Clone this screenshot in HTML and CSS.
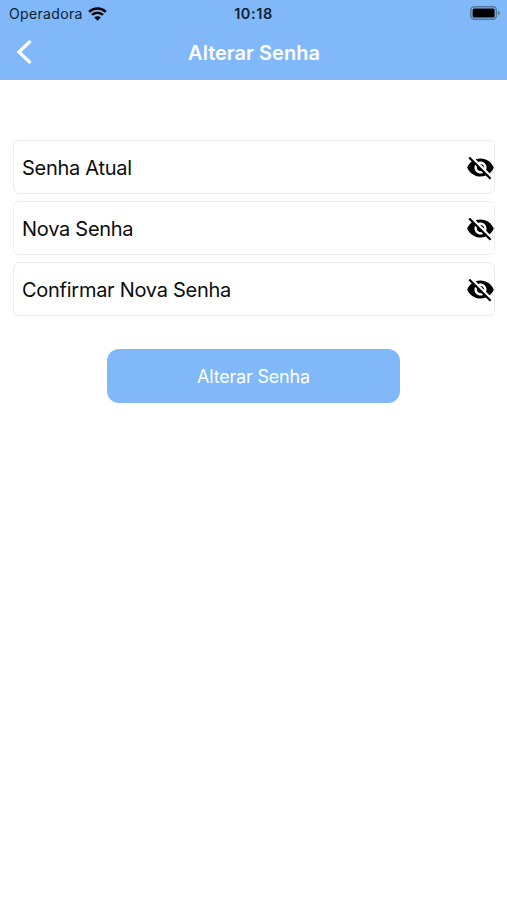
FILE: index.html
```html
<!DOCTYPE html>
<html lang="pt-BR">
<head>
  <meta charset="UTF-8">
  <meta name="viewport" content="width=device-width, initial-scale=1">
  <title>Alterar Senha</title>
  <link rel="stylesheet" href="styles.css">
</head>
<body>
  <!-- Ícone reutilizado nos três campos -->
  <svg class="icons" width="0" height="0">
    <symbol id="eye-off" viewBox="0 0 24 24">
      <path d="M12 7c2.76 0 5 2.24 5 5 0 .65-.13 1.26-.36 1.83l2.92 2.92c1.51-1.26 2.7-2.89 3.43-4.75-1.73-4.39-6-7.5-11-7.5-1.4 0-2.74.25-3.98.7l2.16 2.16C10.74 7.13 11.35 7 12 7zM2 4.27l2.28 2.28.46.46C3.08 8.3 1.78 10.02 1 12c1.73 4.39 6 7.5 11 7.5 1.55 0 3.03-.3 4.38-.84l.42.42L19.73 22 21 20.73 3.27 3 2 4.27zM7.53 9.8l1.55 1.55c-.05.21-.08.43-.08.65 0 1.66 1.34 3 3 3 .22 0 .44-.03.65-.08l1.55 1.55c-.67.33-1.41.53-2.2.53-2.76 0-5-2.24-5-5 0-.79.2-1.53.53-2.2zm4.31-.78l3.15 3.15.02-.16c0-1.66-1.34-3-3-3l-.17.01z"/>
    </symbol>
  </svg>

  <header class="header">
    <div class="status-bar">
      <div class="carrier">
        <span>Operadora</span>
        <svg class="wifi" viewBox="0 0 18 13">
          <path d="M1.1 4.5a11.4 11.4 0 0 1 15.8 0M3.8 7.4a7.5 7.5 0 0 1 10.4 0" fill="none" stroke="#000" stroke-width="2.4"/>
          <path d="M9 13L5.9 9.9a4.4 4.4 0 0 1 6.2 0z"/>
        </svg>
      </div>
      <span class="clock">10:18</span>
      <svg class="battery" viewBox="0 0 30 14">
        <rect x=".8" y=".8" width="25.6" height="12.4" rx="3.6" fill="none" stroke="#527799" stroke-width="1.5"/>
        <rect x="2.6" y="2.6" width="22" height="8.8" rx="1.5"/>
        <path d="M28 4.8c2.4.8 2.4 3.6 0 4.4z" fill="#527799"/>
      </svg>
    </div>
    <div class="nav-bar">
      <button class="back" aria-label="Voltar">
        <svg viewBox="0 0 16 24"><path d="M13.5 2L3 12l10.5 10" fill="none" stroke="#fff" stroke-width="3.2" stroke-linecap="round"/></svg>
      </button>
      <h1>Alterar Senha</h1>
    </div>
  </header>

  <main class="form">
    <div class="field">
      <label class="field-text">Senha Atual</label>
      <svg class="eye"><use href="#eye-off"/></svg>
    </div>
    <div class="field">
      <label class="field-text">Nova Senha</label>
      <svg class="eye"><use href="#eye-off"/></svg>
    </div>
    <div class="field">
      <label class="field-text">Confirmar Nova Senha</label>
      <svg class="eye"><use href="#eye-off"/></svg>
    </div>
    <button class="submit">Alterar Senha</button>
  </main>
</body>
</html>
```

FILE: styles.css
```css
* {
  box-sizing: border-box;
}
body {
  margin: 0;
  background: #fff;
  color: #0c0c0c;
  font-family: Inter, "Liberation Sans", sans-serif;
}
button {
  padding: 0;
  border: none;
  background: none;
  font-family: inherit;
}
.icons {
  display: block;
}
.header {
  height: 79.5px;
  background: #80b8fa;
}
.status-bar {
  display: grid;
  grid-template-columns: 1fr auto 1fr;
  align-items: center;
  height: 27px;
  padding: 0 7px 0 9px;
  color: #10202e;
  font-size: 14px;
}
.carrier {
  display: flex;
  align-items: center;
  gap: 5px;
  letter-spacing: 0.35px;
}
.wifi {
  width: 19px;
  height: 14px;
}
.clock {
  margin-right: 2px;
  font-weight: 600;
  font-size: 14.5px;
  letter-spacing: 0.6px;
}
.battery {
  justify-self: end;
  width: 30px;
  height: 14px;
  margin-top: -1px;
}
.nav-bar {
  display: grid;
  grid-template-columns: 48px 1fr 48px;
  align-items: center;
  height: 50px;
}
.back {
  display: flex;
  justify-content: center;
}
.back svg {
  width: 16px;
  height: 24px;
}
.nav-bar h1 {
  margin: 0;
  padding: 2px 0 0 1px;
  color: #fff;
  font-size: 20px;
  font-weight: 600;
  text-align: center;
}
.form {
  display: flex;
  flex-direction: column;
  gap: 7px;
  padding: 60.5px 12px 0 13px;
}
.field {
  display: flex;
  align-items: center;
  justify-content: space-between;
  height: 54px;
  padding-left: 8px;
  border: 1px solid #ededed;
  border-radius: 6px;
}
.field-text {
  padding-top: 2px;
  font-size: 20px;
  letter-spacing: -0.27px;
}
.eye {
  width: 29px;
  height: 29px;
  margin-right: -1px;
  fill: #000;
}
.submit {
  align-self: center;
  width: 293px;
  height: 54px;
  margin: 26px 1px 0 0;
  padding-top: 1px;
  border-radius: 12px;
  background: #80b8fa;
  color: #fff;
  font-size: 18px;
  letter-spacing: -0.2px;
}
```
